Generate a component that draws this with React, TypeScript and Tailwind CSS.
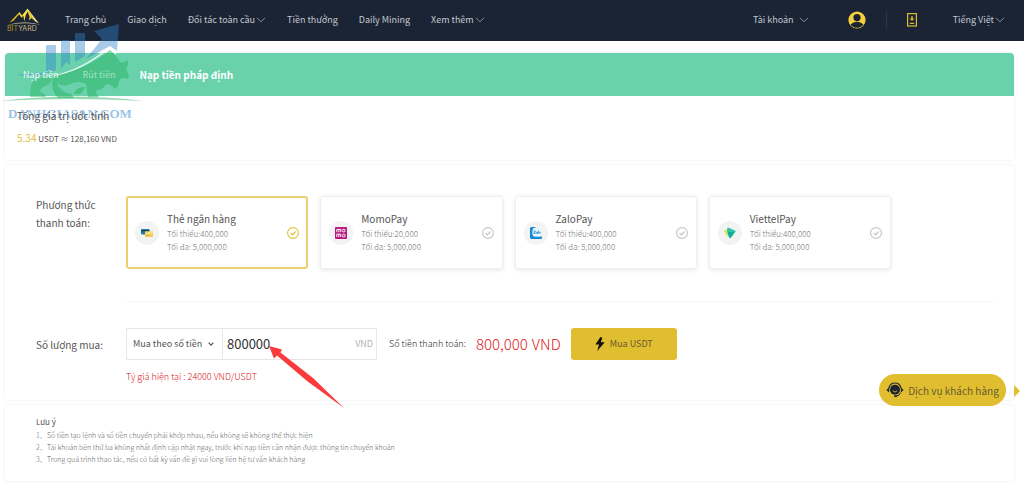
import React, { useState } from 'react';
import clsx from 'clsx';

type IconProps = { className?: string };

const navLinks = [
  { label: 'Trang chủ', more: false },
  { label: 'Giao dịch', more: false },
  { label: 'Đối tác toàn cầu', more: true },
  { label: 'Tiền thưởng', more: false },
  { label: 'Daily Mining', more: false },
  { label: 'Xem thêm', more: true },
];

const tabs = ['Nạp tiền', 'Rút tiền', 'Nạp tiền pháp định'];

const notes = [
  'Số tiền tạo lệnh và số tiền chuyển phải khớp nhau, nếu không sẽ không thể thực hiện',
  'Tài khoản bên thứ ba không nhất định cập nhật ngay, trước khi nạp tiền cần nhận được thông tin chuyển khoản',
  'Trong quá trình thao tác, nếu có bất kỳ vấn đề gì vui lòng liên hệ tư vấn khách hàng',
];

const Chevron = ({ className }: IconProps) => (
  <svg viewBox="0 0 10 6" fill="none" stroke="currentColor" className={className} aria-hidden="true">
    <path d="M1 0.8 L5 4.8 L9 0.8" />
  </svg>
);

const Logo = () => (
  <svg viewBox="0 0 36 26" className="w-9 h-[26px] shrink-0" role="img" aria-label="Bityard">
    <defs>
      <linearGradient id="gold" x1="0" x2="1">
        <stop offset="0" stopColor="#d9a514" />
        <stop offset="0.5" stopColor="#fbe03c" />
        <stop offset="1" stopColor="#efe6b4" />
      </linearGradient>
    </defs>
    <path
      d="M3.5 15.5 L13.5 5 L16 8.5 L21.5 1.5 L33 16.5 L29 14.2 L21.8 4.5 L19.8 8 L18.2 14.5 L17.4 8.8 L15.6 10.8 L13 7.2 L7.5 13.8 Z"
      fill="url(#gold)"
    />
    <path d="M22 6 L23.5 10 L22.8 13.5 L25.5 11 L28 14 L23 3.5 Z" fill="#e9c52c" />
    <path d="M0.5 18.5 Q18 12.5 35.5 18 Q18 14.5 0.5 18.5 Z" fill="#b9b48f" />
    <text x="1" y="24" fontSize="7" fill="#b9921f" fontFamily="Inter, sans-serif">
      BIT<tspan fill="#cbbf8a">YARD</tspan>
    </text>
  </svg>
);

const UserIcon = () => (
  <svg viewBox="0 0 18 18" className="w-[18px] h-[18px]" aria-hidden="true">
    <circle cx="9" cy="9" r="8.6" fill="#f5cf3c" />
    <circle cx="9" cy="6.6" r="3.6" fill="#1b2435" />
    <path d="M2.6 13.4 Q5 10.8 9 10.8 Q13 10.8 15.4 13.4 Q13 16.8 9 16.8 Q5 16.8 2.6 13.4 Z" fill="#1b2435" />
  </svg>
);

const DownloadIcon = () => (
  <svg viewBox="0 0 10 14" className="w-[10px] h-[14px]" fill="none" stroke="#dcbc2e" aria-hidden="true">
    <rect x="0.6" y="0.6" width="8.8" height="12.4" strokeWidth="1.2" />
    <path d="M5 3 V7" strokeWidth="1.4" />
    <path d="M2.6 5.4 L5 8 L7.4 5.4 Z" fill="#dcbc2e" stroke="none" />
    <path d="M2.8 10.4 H7.2" strokeWidth="1.2" />
  </svg>
);

const CheckCircle = ({ className }: IconProps) => (
  <svg viewBox="0 0 12 12" fill="none" stroke="currentColor" className={className} aria-hidden="true">
    <circle cx="6" cy="6" r="5.4" strokeWidth="1.1" />
    <path d="M3.6 6.1 L5.4 7.8 L8.5 4.5" strokeWidth="1.2" />
  </svg>
);

const BankIcon = () => (
  <svg viewBox="0 0 12 12" className="w-3 h-3" aria-hidden="true">
    <rect x="0" y="2" width="8.5" height="5.4" rx="0.8" fill="#2a7aa3" />
    <rect x="0" y="3" width="8.5" height="1.4" fill="#174b6b" />
    <rect x="4" y="4.2" width="8" height="5.8" rx="0.8" fill="#f3cd55" />
    <path d="M4 7 L9 4.2 L12 3.4 L12 5.6 L8 7.4 Z" fill="#f9e29a" />
    <rect x="5" y="8" width="3" height="0.8" fill="#d9a92b" />
  </svg>
);

const MomoIcon = () => (
  <svg viewBox="0 0 12 12" className="w-3 h-3" aria-hidden="true">
    <rect width="12" height="12" rx="1" fill="#b5177c" />
    <g fill="none" stroke="#fff" strokeWidth="1">
      <path d="M1.8 5.2 V2.4 H5.8 V5.2 M3.8 2.4 V5.2" />
      <circle cx="8.8" cy="3.6" r="1.4" />
      <path d="M1.8 10 V7.2 H5.8 V10 M3.8 7.2 V10" />
      <circle cx="8.8" cy="8.6" r="1.4" />
    </g>
  </svg>
);

const ZaloIcon = () => (
  <svg viewBox="0 0 12 12" className="w-3 h-3" aria-hidden="true">
    <path d="M1.5 0 H6 Q3 1 2.6 4 V7 Q3 9.5 5 9.6 H12 V10.8 Q12 12 10.8 12 H1.5 Q0 12 0 10.6 V1.5 Q0 0 1.5 0 Z" fill="#1489d8" />
    <rect x="2.6" y="1" width="9.2" height="8.4" rx="2" fill="#e9f5fd" />
    <path d="M3.6 4 H5.4 L3.6 6.4 H5.6 M7.4 5 V6.6 M8.4 3.6 V6.6" fill="none" stroke="#1489d8" strokeWidth="0.8" />
    <circle cx="6.7" cy="5.7" r="0.7" fill="none" stroke="#1489d8" strokeWidth="0.6" />
    <circle cx="9.9" cy="5.7" r="0.7" fill="none" stroke="#1489d8" strokeWidth="0.6" />
  </svg>
);

const ViettelIcon = () => (
  <svg viewBox="0 0 12 12" className="w-3 h-3" aria-hidden="true">
    <path d="M0 3.6 Q0 2.6 1 2.8 L7 4 L4 9 Q3 9 2.4 8 Z" fill="#d8ea4e" />
    <path d="M3.2 1.2 Q3.6 0.4 4.6 0.8 L11 3.4 Q12 4 11.4 5 L7 10.8 Q5.8 11.8 5 10.4 L3 4 Z" fill="#2cc6a5" />
    <path d="M3.4 4.8 L10 5.2 L6.4 10.4 L5 9.4 Z" fill="#13a99a" />
  </svg>
);

const BoltIcon = () => (
  <svg viewBox="0 0 10 14" className="w-[10px] h-[14px]" fill="#111" aria-hidden="true">
    <path d="M5.4 0 L0.4 7.6 H4 L2.2 14 L9.8 5.2 H5.8 L7.4 0.8 Z" />
  </svg>
);

const SupportIcon = () => (
  <svg viewBox="0 0 18 16" className="w-[18px] h-4" aria-hidden="true">
    <path d="M3 6 Q4.2 1 9 1 Q13.8 1 15 6" fill="none" stroke="#1d2430" strokeWidth="1.2" />
    <circle cx="9" cy="7.8" r="5" fill="#1d2430" />
    <path d="M0.4 8 L3.2 5.2 V10.6 Z M17.6 8 L14.8 5.2 V10.6 Z" fill="#1d2430" />
    <path d="M6.8 8.8 Q9 11.4 11.2 8.8" fill="none" stroke="#e2be30" strokeWidth="0.9" />
    <path d="M14.6 10.6 Q13.6 14 9.8 14.2" fill="none" stroke="#1d2430" />
    <rect x="8" y="13.2" width="3" height="1.8" rx="0.9" fill="#1d2430" />
  </svg>
);

const methods = [
  { id: 'bank', name: 'Thẻ ngân hàng', min: '400,000', max: '5,000,000', Icon: BankIcon },
  { id: 'momo', name: 'MomoPay', min: '20,000', max: '5,000,000', Icon: MomoIcon },
  { id: 'zalo', name: 'ZaloPay', min: '400,000', max: '5,000,000', Icon: ZaloIcon },
  { id: 'viettel', name: 'ViettelPay', min: '400,000', max: '5,000,000', Icon: ViettelIcon },
];

const Watermark = () => (
  <div className="absolute left-0 top-[22px] w-36 pointer-events-none">
    <svg viewBox="0 0 144 82" className="w-36 h-[82px] block" aria-hidden="true">
      <g fill="#3182ce" fillOpacity="0.42">
        <path d="M46 24 Q46 23 47 23 H55 Q56 23 56 24 V48 L46 51 Z" />
        <path d="M61 19 Q61 18 62 18 H69 Q70 18 70 19 V43 L66 40 L61 47 Z" />
        <path d="M75 12 Q75 11 76 11 H84 Q85 11 85 12 V34 L75 40 Z" />
        <path d="M94 9 L119 2 L117 29 L110 24 L86 37 L102 17 Z" />
        <path d="M17 53 Q34 50 50 51 Q36 55 17 53 Z" />
      </g>
      <path d="M54 54 Q82 48 109 26 L116 32" fill="none" stroke="#fff" strokeOpacity="0.85" strokeWidth="1.5" />
      {/* bull: back and head, hind leg, front leg */}
      <path
        d="M53 54 Q86 48 110 28 Q117 34 120 40 Q124 42 127 38 Q130 42 126 46 L129 54 Q128 58 125 56 Q121 55 119 59 Q119 65 115 67 Q111 62 106 62 Q103 68 97 68 L96 71 L99 75 H88 L86 62 Q78 58 70 62 Q62 66 57 60 Q59 70 71 72 L74 76 H58 Q50 68 53 54 Z"
        fill="#28b45f"
        fillOpacity="0.5"
      />
      <path d="M52 55 Q34 54 31 63 L30 75 H46 Q45 71 40 70 Q41 65 47 63 Q52 61 52 55 Z" fill="#28b45f" fillOpacity="0.45" />
      <path d="M74 72 Q76 65 85 65 Q84 69 80 72 Z" fill="#28b45f" fillOpacity="0.55" />
      <path d="M0 79 Q72 70 144 79 Q72 75 0 79 Z" fill="#28b45f" fillOpacity="0.5" />
    </svg>
    <div className="pl-2 font-['Liberation_Serif',serif] font-bold text-[13px] leading-5 text-[#3182ce]/50">
      DANHGIASAN.COM
    </div>
  </div>
);

const Header = () => (
  <header className="flex items-center h-[41px] bg-[#1b2435] pl-[6px] pr-[19px] pb-px text-[9px] leading-4 text-[#c3c7ce]">
    <Logo />
    <nav className="ml-[23px]">
      <ul className="flex items-center gap-[21px]">
        {navLinks.map((link) => (
          <li key={link.label}>
            <a href="#" className="flex items-center gap-px whitespace-nowrap">
              {link.label}
              {link.more && <Chevron className="w-[10px] h-[6px] text-[#8b919c]" />}
            </a>
          </li>
        ))}
      </ul>
    </nav>
    <div className="ml-auto flex items-center">
      <button className="flex items-center gap-[5px]">
        Tài khoản
        <Chevron className="w-[10px] h-[6px] text-[#8b919c]" />
      </button>
      <a href="#" aria-label="Hồ sơ" className="ml-[39px]">
        <UserIcon />
      </a>
      <span className="ml-5 h-4 w-px bg-[#2c3a50]" />
      <a href="#" aria-label="Tải ứng dụng" className="ml-5">
        <DownloadIcon />
      </a>
      <button className="ml-9 flex items-center gap-px">
        Tiếng Việt
        <Chevron className="w-[10px] h-[6px] text-[#8b919c]" />
      </button>
    </div>
  </header>
);

const App = () => {
  const [tab, setTab] = useState(2);
  const [method, setMethod] = useState('bank');
  const [amount, setAmount] = useState('800000');

  return (
    <div className="relative bg-white font-['Noto_Sans_CJK_SC',sans-serif] text-[#555]">
      <Header />

      <main className="pl-[5px] pr-[10px] pt-3 pb-1 flex flex-col gap-[5px]">
        <section className="rounded-sm shadow-[0_0_3px_rgba(0,0,0,0.09)] pb-3">
          <div className="flex items-center h-[43px] rounded-t-sm bg-[#69d1ac] px-[18px] gap-6">
            {tabs.map((label, i) => (
              <button
                key={label}
                onClick={() => setTab(i)}
                className={clsx(
                  'relative z-10',
                  tab === i ? 'text-[10px] font-bold text-white' : 'text-[9px]',
                  tab !== i && (i === 0 ? 'text-white/90' : 'text-white/50')
                )}
              >
                {label}
              </button>
            ))}
          </div>
          <div className="px-3 pt-[11px]">
            <h2 className="relative z-10 text-[10px] leading-[18px]">Tổng giá trị ước tính</h2>
            <p className="mt-1 text-[8px] leading-[18px]">
              <span className="text-[10px] text-[#e3bd3c]">5.34</span> USDT ≈ 128,160 VND
            </p>
          </div>
        </section>

        <section className="rounded-sm shadow-[0_0_3px_rgba(0,0,0,0.09)] pl-[31px] pr-5 pt-[31px] pb-[14px]">
          <div className="flex">
            <h3 className="w-[90px] shrink-0 text-[10px] leading-[18px]">
              Phương thức
              <br />
              thanh toán:
            </h3>
            <div className="flex-1 pb-8 border-b border-[#f5f5f5]">
              <div className="grid grid-cols-4 gap-3 max-w-[765px]">
                {methods.map(({ id, name, min, max, Icon }) => (
                  <label
                    key={id}
                    className={clsx(
                      'relative flex items-center h-[73px] rounded-[3px] cursor-pointer',
                      method === id
                        ? 'px-[7px] border-2 border-[#ecd06f]'
                        : 'px-2 border border-[#efefef] shadow-[0_1px_4px_rgba(0,0,0,0.1)]'
                    )}
                  >
                    <input
                      type="radio"
                      name="method"
                      className="sr-only"
                      checked={method === id}
                      onChange={() => setMethod(id)}
                    />
                    <span className="flex items-center justify-center w-6 h-6 rounded-full bg-[#f3f3f3]">
                      <Icon />
                    </span>
                    <span className="ml-2 pb-px flex-1 text-[8px] leading-[13px] text-[#777] font-light">
                      <span className="block text-[10px] leading-4 font-normal text-[#555]">{name}</span>
                      <span className="block">Tối thiểu:{min}</span>
                      <span className="block">Tối đa: {max}</span>
                    </span>
                    <CheckCircle
                      className={clsx('w-3 h-3', method === id ? 'text-[#e3c13c]' : 'text-[#c4c4c4]')}
                    />
                  </label>
                ))}
              </div>
            </div>
          </div>

          <div className="mt-[26px] flex items-center text-[10px]">
            <label htmlFor="amount" className="w-[90px] shrink-0">
              Số lượng mua:
            </label>
            <div className="flex items-center h-8 w-[251px] border border-[#e6e6e6]">
              <div className="relative flex items-center w-24 h-full border-r border-[#e6e6e6]">
                <select
                  aria-label="Mua theo số tiền"
                  className="w-full h-full appearance-none bg-transparent pl-[6px] text-[9px] outline-none"
                >
                  <option>Mua theo số tiền</option>
                </select>
                <Chevron className="absolute right-2 w-[6px] h-1 stroke-2 pointer-events-none" />
              </div>
              <input
                id="amount"
                value={amount}
                onChange={(e) => setAmount(e.target.value)}
                className="flex-1 min-w-0 pl-1 text-[13px] text-[#333] outline-none"
              />
              <span className="pr-[3px] text-[9px] text-[#b3b3b3]">VND</span>
            </div>
            <span className="ml-3 text-[9px] font-light text-[#222]">Số tiền thanh toán:</span>
            <span className="ml-[10px] flex gap-1 text-[15px] font-light text-[#e01818]">
              <span>{Number(amount).toLocaleString('en-US')}</span>
              <span>VND</span>
            </span>
            <button className="ml-[10px] flex items-center justify-center gap-[5px] w-[106px] h-8 rounded-[3px] bg-[#e1be30] text-[9px] text-[#665c2e]">
              <BoltIcon />
              Mua USDT
            </button>
          </div>
          <p className="mt-2 ml-[90px] text-[9px] font-light leading-[18px] text-[#d91414]">
            Tỷ giá hiện tại : 24000 VND/USDT
          </p>
        </section>

        <section className="rounded-sm shadow-[0_0_3px_rgba(0,0,0,0.09)] px-[31px] pt-[10px] pb-4">
          <h3 className="text-[8px] leading-[14px]">Lưu ý</h3>
          <ol className="text-[7px] leading-3 font-light text-[#666]">
            {notes.map((note, i) => (
              <li key={note} className="flex">
                <span className="w-[11px]">{i + 1}、</span>
                {note}
              </li>
            ))}
          </ol>
        </section>
      </main>

      <Watermark />

      <svg viewBox="0 0 76 63" className="absolute left-[269px] top-[346px] w-[76px] h-[63px] pointer-events-none" aria-hidden="true">
        <path d="M0 0 L13 3.5 L11.5 6.5 L44 32 L75 62 L38 35 L8 9.5 L5 12.5 Z" fill="#fb3b3b" />
      </svg>

      <button className="absolute right-[18px] top-[374px] flex items-center justify-center gap-1 w-[127px] h-8 rounded-full bg-[#e1be30] text-[10px] text-[#665c2e]">
        <SupportIcon />
        Dịch vụ khách hàng
      </button>
      <svg viewBox="0 0 6 12" className="absolute right-1 top-[385px] w-[6px] h-3" aria-hidden="true">
        <path d="M0 0 L6 6 L0 12 Z" fill="#e1be30" />
      </svg>
    </div>
  );
};

export default App;
